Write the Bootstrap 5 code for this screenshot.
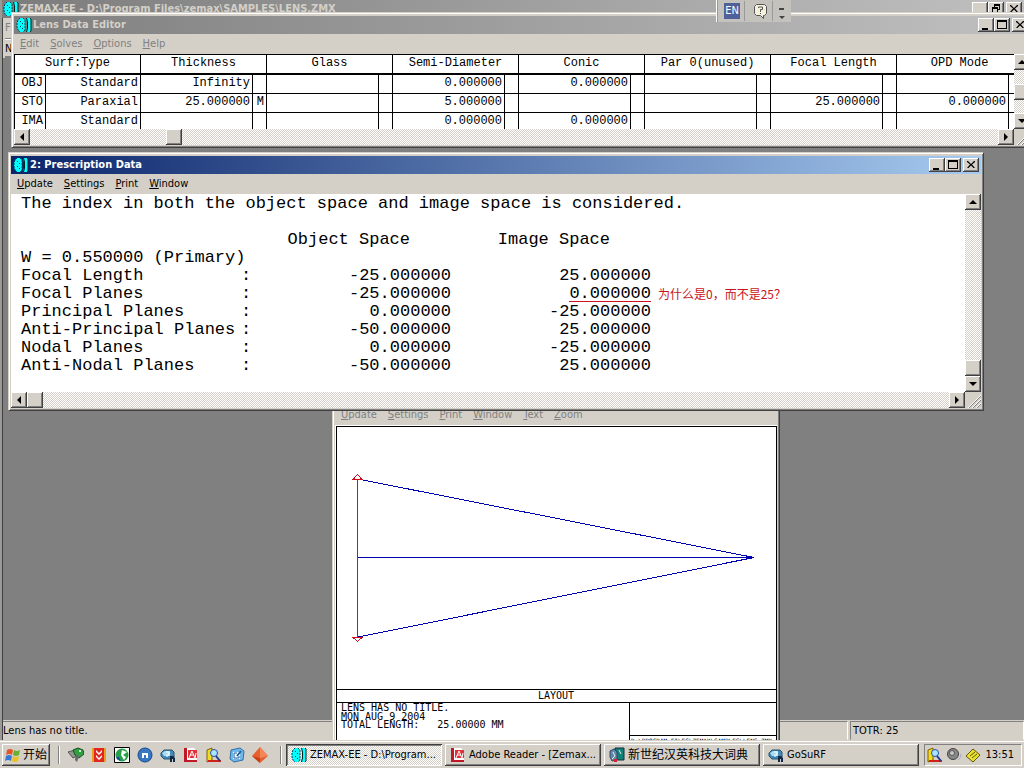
<!DOCTYPE html>
<html lang="en">
<head>
<meta charset="utf-8">
<title>ZEMAX-EE</title>
<meta name="viewport" content="width=device-width, initial-scale=1">
<link href="https://cdn.jsdelivr.net/npm/bootstrap@5.3.0/dist/css/bootstrap.min.css" rel="stylesheet">
<style>
:root{--face:#d4d0c8;--ui:"DejaVu Sans Condensed","Noto Sans CJK SC",sans-serif;--mono:"Liberation Mono",monospace}
body{font:11px/14px var(--ui);color:#000;background:#808080;height:100vh;overflow:hidden}
button{font:inherit;color:#000;padding:0;border:0}
a{color:inherit;text-decoration:none}
svg{display:block;flex:none}
.app{background:#808080;border-left:2px solid #9c9a96;box-shadow:inset 1px 0 #404040}
.mainbar{height:18px;background:linear-gradient(90deg,#7c7c7c,#c0c0c0);color:#d4d0c8;font-weight:700;padding:0 2px 0 1px;gap:1px}
.remnant{width:10px;background:var(--face);color:#808080;margin-left:1px;padding-left:2px;overflow:hidden}
.remnant span{display:block;height:20px;line-height:20px}
.remnant span + span{border-top:1px solid #808080;box-shadow:inset 0 1px #fff;color:#000;border-bottom:2px solid #808080}
.winbox{position:absolute;background:var(--face);border:1px solid;border-color:var(--face) #404040 #404040 var(--face);box-shadow:inset 1px 1px #fff,inset -1px -1px #808080;padding:3px 2px 2px}
.win-editor{left:9px;right:-9px;top:12px}
.win-data{left:6px;right:40px;top:152px}
.win-layout{left:330px;width:448px;top:389px;height:380px;padding-top:15px}
.caption-bar{height:18px;font-weight:700;padding:0 2px;gap:1px}
.caption-on{background:linear-gradient(90deg,#0a246a,#a6caf0);color:#fff}
.caption-off{background:linear-gradient(90deg,#7f7f7f,#c0c0c0);color:var(--face)}
.menu-row{height:20px;padding-left:6px;gap:11px;line-height:20px}
.menu-dim{color:#808080}
.raised{background:var(--face);box-shadow:inset -1px -1px #404040,inset 1px 1px #fff,inset -2px -2px #808080}
.cap-btn{width:16px;height:14px}
.cap-close{margin-left:2px}
.sb-btn{width:16px;height:16px;flex:none}
.track{background:repeating-conic-gradient(#fff 0 25%,var(--face) 0 50%) 0 0/2px 2px}
.corner{width:16px;height:16px;flex:none}
.sheet{height:75px;overflow:hidden;background:#fff}
.lens-table{table-layout:fixed;width:1008px;border-collapse:separate;border-spacing:0;font:12px/15px var(--mono);border-top:1px solid #000}
.lens-table th,.lens-table td{border-left:1px solid #000;border-bottom:1px solid #000;padding:1px 2px 2px 0;height:19px;text-align:right;white-space:nowrap;overflow:hidden}
.lens-table th{font-weight:400;text-align:center;border-bottom-width:2px;height:20px;padding-right:0}
.listing{background:#fff;height:198px;padding:1px 0 0 10px;overflow:hidden}
.report{font:17px/18px var(--mono);table-layout:fixed;width:100%;border-spacing:0}
.report td,.report th{padding:0;height:18px;font-weight:400;white-space:nowrap;overflow:visible}
.report .num{text-align:right}
.report .colhead{text-align:right;padding-right:41px}
.flagged{border-bottom:1px solid #d01020;display:inline-block;height:17px;line-height:18px}
.report .remark{font:12px/16px "Noto Sans CJK SC",sans-serif;color:#c81420;padding-left:7px}
.statusbar{height:20px;background:var(--face);border-top:1px solid var(--face);margin-left:1px;gap:2px;line-height:17px}
.pane{border:1px solid;border-color:#808080 #fff var(--face) #808080;padding-left:2px}
.pane-main{border-left:0;padding-left:0}
.pane-total{width:174px}
.taskbar{height:28px;background:var(--face);border-top:1px solid var(--face);box-shadow:inset 0 1px #fff;padding:2px}
.start{width:48px;height:22px;gap:2px;padding-left:3px}
.cjk{font-size:12px}
.grip{width:3px;height:18px;border-left:1px solid #808080;box-shadow:inset 1px 0 #fff}
.quick{gap:7px;padding:0 12px 0 7px}
.quick button{background:none;width:16px;height:16px}
.tasks{gap:3px;margin-left:3px}
.task{width:156px;height:22px;padding:0 5px;gap:3px}
.task-on{box-shadow:inset 1px 1px #404040,inset -1px -1px #fff,inset 2px 2px #808080}
.tray{height:22px;width:98px;border:1px solid;border-color:#808080 #fff #fff #808080;padding:0 7px 0 2px;gap:3px}
.langbar{position:absolute;left:714px;top:0;height:22px;width:75px;background:#c4c2bd;border-left:1px solid #fff;box-shadow:inset 1px 0 #999;padding-left:7px}
.lang{background:#506098;color:#fff;width:16px;height:16px}
.vline{width:1px;height:20px;background:#999}
</style>
</head>
<body class="d-flex flex-column">
<svg width="0" height="0" class="position-absolute" aria-hidden="true">
<defs>
<g id="lens"><path d="M4 1h3l2 2v10l-2 2H4l-2-2-1-3V6l1-3z" fill="#0ff"/><path d="M4 1 2 3 1 6v4l1 3 2 2M7 1l2 2v10l-2 2" fill="none" stroke="#045" stroke-dasharray="2 1"/><path d="M4 4h1v1H4zM6 6h1v1H6zM4 9h1v1H4zM6 11h1v1H6z" fill="#045"/><path d="M10 1h4l1 1v12l-1 1h-4l1-4V5z" fill="#0ff"/><path d="M10.500 1l1 4v6l-1 4M14 1l1 1v12l-1 1" fill="none" stroke="#022"/></g>
<path id="mini" d="M4 10h6v2H4z"/>
<path id="maxi" d="M3 2h10v9H3zM4 4v6h8V4z" fill-rule="evenodd"/>
<path id="restore" d="M6 2h6v6h-2V7h1V4H7v1H6zM4 5h6v6H4zM5 7v3h4V7z" fill-rule="evenodd"/>
<path id="closex" d="M4 3h1l3 3 3-3h1v1L9 6.500 12 10h-1.500L8 7.500 5.500 10H4l3-3.500L4 4z"/>
<path id="up" d="M8 6l4 4H4z"/><path id="down" d="M4 6h8l-4 4z"/>
<path id="left" d="M6 8l4-4v8z"/><path id="right" d="M10 8l-4-4v8z"/>
<g id="sizer" stroke="#808080"><path d="M4 16 16 4M8 16l8-8M12 16l4-4"/><path d="M3 16 16 3M7 16l9-9M11 16l5-5" stroke="#fff"/></g>
<g id="adobe"><path d="M2 1h9l3 3v11H2z" fill="#fff"/><path d="M1 1h3v14H1zM1 13h13v2H1z" fill="#c01828"/><path d="M5 3h9v8H5z" fill="#e03038"/><path d="M6 11 9 4l3 7M7 8h4M12 11l1-5" fill="none" stroke="#fff"/></g>
<g id="gosurf"><path d="M1 6l3-3h8l2 2v5l-3 2H4L1 9z" fill="#438bb8" stroke="#285070"/><path d="M2 6l3-2h5v5H4z" fill="#a8dcf4"/><path d="M6 5h3v3H7v2" fill="none" stroke="#fff"/><path d="M10 15V9h3l2 2v4h-2v-3h-1v3z" fill="#102848"/></g>
<g id="viewer"><path d="M1 3l5-2v12l-5 2z" fill="#f2dc20" stroke="#806000"/><path d="M2 13h13v2H2z" fill="#d02018"/><circle cx="8" cy="6" r="3.500" fill="#a8e4fa" stroke="#2450b0"/><path d="M10 9l4 5" stroke="#203890" stroke-width="2"/></g>
</defs>
</svg>

<main class="app position-relative flex-grow-1 d-flex flex-column overflow-hidden">
  <header class="mainbar d-flex align-items-center">
    <svg width="16" height="16"><use href="#lens"/></svg><span class="text-nowrap">ZEMAX-EE - D:\Program Files\zemax\SAMPLES\LENS.ZMX</span>
    <div class="ms-auto d-flex">
      <button class="cap-btn raised" aria-label="Minimize"><svg width="16" height="14"><use href="#mini"/></svg></button>
      <button class="cap-btn raised" aria-label="Restore"><svg width="16" height="14"><use href="#restore"/></svg></button>
      <button class="cap-btn cap-close raised" aria-label="Close"><svg width="16" height="14"><use href="#closex"/></svg></button>
    </div>
  </header>
  <div class="remnant"><span>F</span><span>N</span></div>
  <footer class="statusbar d-flex mt-auto">
    <div class="pane pane-main flex-grow-1">Lens has no title.</div>
    <div class="pane pane-total">TOTR: 25</div>
  </footer>

  <section class="winbox win-layout" aria-label="Layout">
    <nav class="menu-row menu-dim d-flex">
      <a href="#"><u>U</u>pdate</a><a href="#"><u>S</u>ettings</a><a href="#"><u>P</u>rint</a><a href="#"><u>W</u>indow</a><a href="#"><u>T</u>ext</a><a href="#"><u>Z</u>oom</a>
    </nav>
    <svg width="442" height="330" viewBox="335 425 442 330" shape-rendering="crispEdges" fill="none">
      <path d="M335 425h442v330H335z" fill="#fff"/>
      <path d="M336.500 755V426.500h440V755M336 689.500h440M336 702.500h440M629.500 702v53M629 735.500h147" stroke="#000"/>
      <path d="M358 479l396 78.500L358 637M358 557.500h396" stroke="#0000b0"/>
      <path d="M357 479h1v158h-1z" fill="#d01020"/>
      <path d="M353 479.500l4.500-5 4.500 5zM353 637.500l4.500 4 4.500-4z" stroke="#d01020"/>
      <g fill="#000" font-family="DejaVu Sans Mono, monospace" font-size="10">
        <text x="556" y="699" text-anchor="middle">LAYOUT</text>
        <text x="341" y="711">LENS HAS NO TITLE.</text>
        <text x="341" y="720">MON AUG 9 2004</text>
        <text x="341" y="728" xml:space="preserve">TOTAL LENGTH:   25.00000 MM</text>
        <text x="631" y="743" font-size="6">D:\PROGRAM FILES\ZEMAX\SAMPLES\LENS.ZMX</text>
      </g>
    </svg>
  </section>

  <section class="winbox win-editor" aria-label="Lens Data Editor">
    <div class="caption-bar caption-off d-flex align-items-center">
      <svg width="16" height="16"><use href="#lens"/></svg><span>Lens Data Editor</span>
      <div class="ms-auto d-flex">
        <button class="cap-btn raised" aria-label="Minimize"><svg width="16" height="14"><use href="#mini"/></svg></button>
        <button class="cap-btn raised" aria-label="Maximize"><svg width="16" height="14"><use href="#maxi"/></svg></button>
        <button class="cap-btn cap-close raised" aria-label="Close"><svg width="16" height="14"><use href="#closex"/></svg></button>
      </div>
    </div>
    <nav class="menu-row menu-dim d-flex">
      <a href="#"><u>E</u>dit</a><a href="#"><u>S</u>olves</a><a href="#"><u>O</u>ptions</a><a href="#"><u>H</u>elp</a>
    </nav>
    <div class="d-flex">
      <div class="sheet flex-grow-1">
        <table class="lens-table">
          <colgroup><col style="width:31px"><col style="width:95px"><col style="width:112px"><col style="width:14px"><col style="width:112px"><col style="width:14px"><col style="width:112px"><col style="width:14px"><col style="width:112px"><col style="width:14px"><col style="width:112px"><col style="width:14px"><col style="width:112px"><col style="width:14px"><col style="width:112px"><col style="width:14px"></colgroup>
          <thead><tr><th colspan="2">Surf:Type</th><th colspan="2">Thickness</th><th colspan="2">Glass</th><th colspan="2">Semi-Diameter</th><th colspan="2">Conic</th><th colspan="2">Par 0(unused)</th><th colspan="2">Focal Length</th><th colspan="2">OPD Mode</th></tr></thead>
          <tbody>
          <tr><td>OBJ</td><td>Standard</td><td>Infinity</td><td></td><td></td><td></td><td>0.000000</td><td></td><td>0.000000</td><td></td><td></td><td></td><td></td><td></td><td></td><td></td></tr>
          <tr><td>STO</td><td>Paraxial</td><td>25.000000</td><td>M</td><td></td><td></td><td>5.000000</td><td></td><td></td><td></td><td></td><td></td><td>25.000000</td><td></td><td>0.000000</td><td></td></tr>
          <tr><td>IMA</td><td>Standard</td><td></td><td></td><td></td><td></td><td>0.000000</td><td></td><td>0.000000</td><td></td><td></td><td></td><td></td><td></td><td></td><td></td></tr>
          </tbody>
        </table>
      </div>
      <div class="track d-flex flex-column">
        <button class="sb-btn raised" aria-label="Scroll up"><svg width="16" height="16"><use href="#up"/></svg></button>
        <div class="sb-btn raised my-auto"></div>
        <button class="sb-btn raised" aria-label="Scroll down"><svg width="16" height="16"><use href="#down"/></svg></button>
      </div>
    </div>
    <div class="d-flex">
      <div class="track d-flex flex-grow-1">
        <button class="sb-btn raised" aria-label="Scroll left"><svg width="16" height="16"><use href="#left"/></svg></button>
        <div class="sb-btn raised" style="margin-left:13.6%"></div>
        <button class="sb-btn raised ms-auto" aria-label="Scroll right"><svg width="16" height="16"><use href="#right"/></svg></button>
      </div>
      <svg class="corner"><use href="#sizer"/></svg>
    </div>
  </section>

  <section class="winbox win-data" aria-label="Prescription Data">
    <div class="caption-bar caption-on d-flex align-items-center">
      <svg width="16" height="16"><use href="#lens"/></svg><span>2: Prescription Data</span>
      <div class="ms-auto d-flex">
        <button class="cap-btn raised" aria-label="Minimize"><svg width="16" height="14"><use href="#mini"/></svg></button>
        <button class="cap-btn raised" aria-label="Maximize"><svg width="16" height="14"><use href="#maxi"/></svg></button>
        <button class="cap-btn cap-close raised" aria-label="Close"><svg width="16" height="14"><use href="#closex"/></svg></button>
      </div>
    </div>
    <nav class="menu-row d-flex">
      <a href="#"><u>U</u>pdate</a><a href="#"><u>S</u>ettings</a><a href="#"><u>P</u>rint</a><a href="#"><u>W</u>indow</a>
    </nav>
    <div class="d-flex">
      <div class="listing flex-grow-1">
        <table class="report">
          <colgroup><col style="width:220px"><col style="width:10px"><col style="width:200px"><col style="width:200px"><col></colgroup>
          <tbody>
          <tr><td colspan="5">The index in both the object space and image space is considered.</td></tr>
          <tr><td colspan="5"></td></tr>
          <tr><td></td><td></td><th class="colhead">Object Space</th><th class="colhead">Image Space</th><td></td></tr>
          <tr><td colspan="5">W = 0.550000 (Primary)</td></tr>
          <tr><td>Focal Length</td><td>:</td><td class="num">-25.000000</td><td class="num">25.000000</td><td></td></tr>
          <tr><td>Focal Planes</td><td>:</td><td class="num">-25.000000</td><td class="num"><span class="flagged">0.000000</span></td><td class="remark">为什么是0，而不是25？</td></tr>
          <tr><td>Principal Planes</td><td>:</td><td class="num">0.000000</td><td class="num">-25.000000</td><td></td></tr>
          <tr><td>Anti-Principal Planes</td><td>:</td><td class="num">-50.000000</td><td class="num">25.000000</td><td></td></tr>
          <tr><td>Nodal Planes</td><td>:</td><td class="num">0.000000</td><td class="num">-25.000000</td><td></td></tr>
          <tr><td>Anti-Nodal Planes</td><td>:</td><td class="num">-50.000000</td><td class="num">25.000000</td><td></td></tr>
          </tbody>
        </table>
      </div>
      <div class="track d-flex flex-column">
        <button class="sb-btn raised" aria-label="Scroll up"><svg width="16" height="16"><use href="#up"/></svg></button>
        <div class="sb-btn raised mt-auto"></div>
        <button class="sb-btn raised" aria-label="Scroll down"><svg width="16" height="16"><use href="#down"/></svg></button>
      </div>
    </div>
    <div class="d-flex">
      <div class="track d-flex flex-grow-1">
        <button class="sb-btn raised" aria-label="Scroll left"><svg width="16" height="16"><use href="#left"/></svg></button>
        <div class="sb-btn raised"></div>
        <button class="sb-btn raised ms-auto" aria-label="Scroll right"><svg width="16" height="16"><use href="#right"/></svg></button>
      </div>
      <svg class="corner"><use href="#sizer"/></svg>
    </div>
  </section>

  <div class="langbar d-flex align-items-center">
    <button class="lang">EN</button><span class="vline ms-1"></span>
    <button class="bg-transparent ms-2" aria-label="Help"><svg width="15" height="16" fill="#f4f2dc" stroke="#555"><path d="M3.500 1.500h8l2 2v7l-2 2h-1v3l-3-3h-4l-2-2v-7z"/><path d="M5.500 5V4h4v2.500h-2V9M7.500 10v1" fill="none"/></svg></button>
    <span class="vline ms-1 me-1"></span>
    <svg width="10" height="20"><path d="M2 7h5v2H2zM2 15h6l-3 3z" fill="#444"/></svg>
  </div>
</main>

<footer class="taskbar d-flex align-items-center">
  <button class="start cjk raised d-flex align-items-center"><svg width="16" height="16"><path d="M2 3q3-2 6 0L7 8Q4 6 1 8z" fill="#e85428"/><path d="M9 3q3 2 6 0l-1 5q-3 2-6 0z" fill="#68b030"/><path d="M1 9q3-2 6 0l-1 5Q3 12 0 14z" fill="#3878d8"/><path d="M8 9q3 2 6 0l-1 5q-3 2-6 0z" fill="#f0c020"/></svg>开始</button>
  <span class="grip ms-2"></span>
  <div class="quick d-flex">
    <button aria-label="Media"><svg width="16" height="16"><path d="M0 5l7-2 2 6-4 2z" fill="#909890" stroke="#555"/><path d="M5 3l5-2 5 2 1 4-5 4-4-3z" fill="#30a040" stroke="#185020"/><path d="M8 8l3 1-2 6-2-2z" fill="#606868"/><circle cx="12" cy="4" r="1" fill="#fff"/></svg></button>
    <button aria-label="Download"><svg width="16" height="16"><path d="M1 1h14v14H1z" fill="#e02820"/><path d="M1 1h2v14H1zM13 1h2v14h-2z" fill="#e8a020"/><path d="M5 3l3 3 3-3v2L8 8 5 5zM5 8l3 3 3-3v2l-3 3-3-3z" fill="#fff"/></svg></button>
    <button aria-label="Globe"><svg width="16" height="16"><path d="M.5.500h15v15H.5z" fill="#fff" stroke="#000"/><circle cx="8" cy="8" r="6.500" fill="#28a048"/><path d="M8 3l5 2-4 3 3 2-2 3-3-5z" fill="#fff"/><path d="M2 10l3 0 2 4-4-2z" fill="#1848a0"/></svg></button>
    <button aria-label="Maxthon"><svg width="16" height="16"><circle cx="8" cy="8" r="7" fill="#3878c0" stroke="#184890"/><path d="M5 11V6h6v5H9V8H7v3z" fill="#fff"/></svg></button>
    <button aria-label="GoSuRF"><svg width="16" height="16"><use href="#gosurf"/></svg></button>
    <button aria-label="Adobe Reader"><svg width="16" height="16"><use href="#adobe"/></svg></button>
    <button aria-label="Viewer"><svg width="16" height="16"><use href="#viewer"/></svg></button>
    <button aria-label="Outlook"><svg width="16" height="16"><path d="M2 3l9-2 4 3-1 9-9 2-4-3z" fill="#70b8e8" stroke="#3070a8"/><path d="M4 5h7v7H4z" fill="#f4faff"/><path d="M12 4L8 9" fill="none" stroke="#2060a0" stroke-width="2"/><path d="M8 6H5v5h5V9" fill="none" stroke="#2060a0"/></svg></button>
    <button aria-label="Diamond"><svg width="16" height="16"><path d="M8 0l8 9-8 7-8-7z" fill="#e86030"/><path d="M8 0l8 9-8 2z" fill="#f08858"/><path d="M8 11v5L0 9z" fill="#c84018"/></svg></button>
  </div>
  <span class="grip"></span>
  <div class="tasks d-flex">
    <button class="task task-on track d-flex align-items-center"><svg width="16" height="16"><use href="#lens"/></svg><span class="text-nowrap">ZEMAX-EE - D:\Program...</span></button>
    <button class="task raised d-flex align-items-center"><svg width="16" height="16"><use href="#adobe"/></svg><span class="text-nowrap">Adobe Reader - [Zemax...</span></button>
    <button class="task cjk raised d-flex align-items-center"><svg width="16" height="16"><path d="M6 1h9v12H6z" fill="#108078" stroke="#103040"/><path d="M1 4l4-2 3 3v8l-5 1-2-4z" fill="#6088a8" stroke="#304860"/><path d="M4 5l2 4-3 3M10 3l2 4" stroke="#e8f0f8" fill="none"/><path d="M5 12h3v3H5z" fill="#d82030"/></svg><span class="text-nowrap">新世纪汉英科技大词典</span></button>
    <button class="task raised d-flex align-items-center"><svg width="16" height="16"><use href="#gosurf"/></svg><span>GoSuRF</span></button>
  </div>
  <div class="tray ms-auto d-flex align-items-center">
    <svg width="16" height="16"><use href="#viewer"/></svg>
    <svg width="16" height="16"><circle cx="7" cy="7" r="5.500" fill="#888" stroke="#444"/><circle cx="6" cy="6" r="2.500" fill="#c8c8c8" stroke="#555"/><path d="M12 13q3-2 3-6" fill="none" stroke="#aab"/></svg>
    <svg width="16" height="16"><path d="M1 9l7-7 7 6-7 7z" fill="#e8e030" stroke="#605800"/><path d="M5 9l5-4M7 11l5-4" stroke="#605800"/></svg>
    <span class="ms-auto">13:51</span>
  </div>
</footer>
<script src="https://cdn.jsdelivr.net/npm/bootstrap@5.3.0/dist/js/bootstrap.bundle.min.js"></script>
</body>
</html>
